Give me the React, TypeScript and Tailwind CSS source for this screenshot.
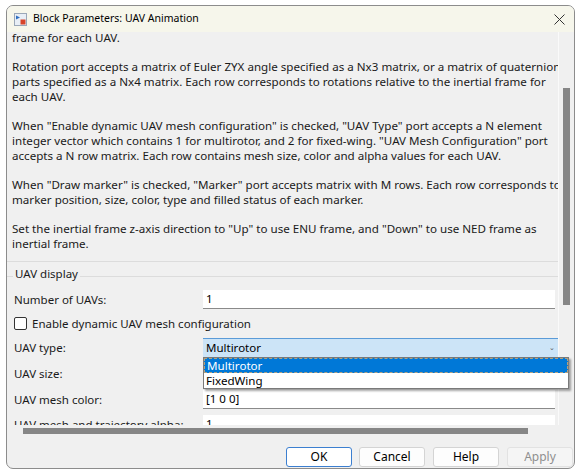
import React from "react";

const paras: string[][] = [
  ["frame for each UAV."],
  [
    "Rotation port accepts a matrix of Euler ZYX angle specified as a Nx3 matrix, or a matrix of quaternion",
    "parts specified as a Nx4 matrix. Each row corresponds to rotations relative to the inertial frame for",
    "each UAV.",
  ],
  [
    "When \"Enable dynamic UAV mesh configuration\" is checked, \"UAV Type\" port accepts a N element",
    "integer vector which contains 1 for multirotor, and 2 for fixed-wing. \"UAV Mesh Configuration\" port",
    "accepts a N row matrix. Each row contains mesh size, color and alpha values for each UAV.",
  ],
  [
    "When \"Draw marker\" is checked, \"Marker\" port accepts matrix with M rows. Each row corresponds to",
    "marker position, size, color, type and filled status of each marker.",
  ],
  [
    "Set the inertial frame z-axis direction to \"Up\" to use ENU frame, and \"Down\" to use NED frame as",
    "inertial frame.",
  ],
];

function BlockIcon() {
  return (
    <svg width="13" height="13" viewBox="0 0 13 13">
      <rect x="0.5" y="0.5" width="12" height="12" fill="#e8eef6" stroke="#9aa7b8" />
      <path d="M2 2.5 L6 4.5 L2 6.5 Z" fill="#2f6fc2" />
      <rect x="6.5" y="6.5" width="5" height="5" fill="#d8442a" />
    </svg>
  );
}

function Input({ value }: { value: string }) {
  return (
    <div className="h-[19px] bg-white border-b border-[#8a8a8a] flex items-center pl-[3px] text-black">
      {value}
    </div>
  );
}

export default function App() {
  return (
    <div className="w-[580px] h-[473px] bg-white relative pt-[5px] pl-[6px] font-['Noto_Sans',sans-serif] text-[11.5px] text-[#1a1a1a] overflow-hidden">
      <div className="w-[569px] h-[464px] border border-[#8c8c8c] rounded-[7px] overflow-hidden bg-[#f0f0f0] flex flex-col">
        {/* title bar */}
        <div className="h-[26px] shrink-0 bg-[#f6f6eb] flex items-center pl-[7px]">
          <BlockIcon />
          <span className="ml-[6px] text-[10.5px] text-black">Block Parameters: UAV Animation</span>
          <div className="ml-auto mr-[8px] w-[14px] h-[14px] flex items-center justify-center">
            <svg width="11" height="11" viewBox="0 0 11 11">
              <path d="M0.5 0.5 L10.5 10.5 M10.5 0.5 L0.5 10.5" stroke="#333" strokeWidth="1" />
            </svg>
          </div>
        </div>

        {/* scroll area */}
        <div className="h-[393px] shrink-0 flex">
          <div className="w-[551px] overflow-hidden">
            <div className="-mt-[2px] pl-[5px] flex flex-col gap-[14px] leading-[15px] whitespace-nowrap text-[11.6px]">
              {paras.map((p, i) => (
                <div key={i}>
                  {p.map((l, j) => (
                    <div key={j}>{l}</div>
                  ))}
                </div>
              ))}
            </div>
            <div className="mt-[10px] h-px bg-[#dcdcdc]" />
            <div className="mt-[4px] h-[16px] flex items-center">
              <div className="w-[6px] h-px bg-[#dcdcdc] mt-[4px]" />
              <span className="px-[2px]">UAV display</span>
              <div className="flex-1 h-px bg-[#dcdcdc] mt-[4px]" />
            </div>
            <div className="grid grid-cols-[196px_352px] items-center mt-[8px] h-[19px]">
              <span className="pl-[7px]">Number of UAVs:</span>
              <Input value="1" />
            </div>
            <div className="flex items-center mt-[5px] h-[19px] pl-[7px]">
              <div className="w-[13px] h-[13px] border border-[#333] rounded-[2px] bg-white" />
              <span className="ml-[5px]">Enable dynamic UAV mesh configuration</span>
            </div>
            <div className="grid grid-cols-[196px_355px] items-center mt-[5px] h-[19px]">
              <span className="pl-[7px]">UAV type:</span>
              <div className="h-[19px] bg-[#cce4f7] border-t border-[#5b9bd8] flex items-center pl-[3px] text-black relative">
                Multirotor
                <span className="absolute right-[3px] top-[5px] text-[7px] leading-none text-[#555]">⌄</span>
              </div>
            </div>
            <div className="grid grid-cols-[196px_352px] items-center mt-[7px] h-[19px]">
              <span className="pl-[7px]">UAV size:</span>
              <Input value="" />
            </div>
            <div className="grid grid-cols-[196px_352px] items-center mt-[7px] h-[19px]">
              <span className="pl-[7px]">UAV mesh color:</span>
              <Input value="[1 0 0]" />
            </div>
            <div className="grid grid-cols-[196px_352px] items-center mt-[6px] h-[19px]">
              <span className="pl-[7px]">UAV mesh and trajectory alpha:</span>
              <Input value="1" />
            </div>
          </div>
          <div className="flex-1 border-l border-[#fafafa] bg-[#f0f0f0]">
            <div className="ml-[4px] mt-[56px] w-[7px] h-[217px] bg-[#868686]" />
          </div>
        </div>

        {/* horizontal scrollbar */}
        <div className="h-[12px] shrink-0">
          <div className="ml-[16px] mt-[3px] w-[505px] h-[6px] bg-[#868686]" />
        </div>

        {/* buttons */}
        <div className="mt-[10px] flex justify-end pr-[1px] text-[12px]">
          <div className="w-[66px] h-[20px] rounded-[3px] bg-white border border-[#3c7fd0] flex items-center justify-center text-black">
            OK
          </div>
          <div className="ml-[7px] w-[66px] h-[20px] rounded-[3px] bg-[#fdfdfd] border border-[#d4d4d4] flex items-center justify-center text-black">
            Cancel
          </div>
          <div className="ml-[8px] w-[66px] h-[20px] rounded-[3px] bg-[#fdfdfd] border border-[#d4d4d4] flex items-center justify-center text-black">
            Help
          </div>
          <div className="ml-[8px] w-[66px] h-[20px] rounded-[3px] bg-[#f5f5f5] border border-[#e2e2e2] flex items-center justify-center text-[#8f8f8f]">
            Apply
          </div>
        </div>
      </div>

      {/* dropdown popup */}
      <div className="absolute left-[203px] top-[357px] w-[366px] h-[32px] bg-white border border-[#7a7a7a] shadow-[2px_2px_2px_rgba(0,0,0,0.35)] text-[11.6px]">
        <div className="h-[15px] bg-[#0078d7] text-white pl-[2px] leading-[13px] border border-dashed border-[#b0a080]">
          Multirotor
        </div>
        <div className="h-[15px] pl-[2px] leading-[15px] text-black">FixedWing</div>
      </div>
    </div>
  );
}
